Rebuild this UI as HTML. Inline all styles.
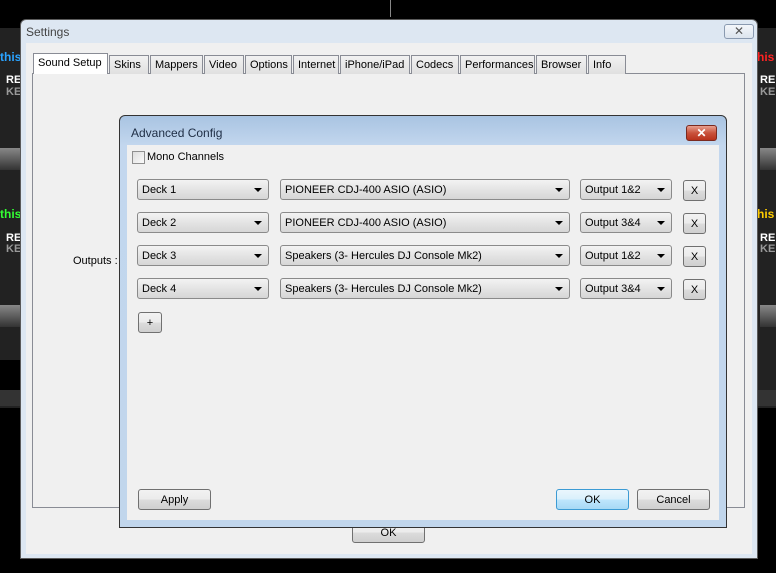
<!DOCTYPE html>
<html><head><style>
*{margin:0;padding:0;box-sizing:border-box}
body{width:776px;height:573px;background:#000;position:relative;overflow:hidden;font-family:"Liberation Sans",sans-serif;font-size:11px;color:#000}
.a{position:absolute}
.dd{position:absolute;height:21px;border:1px solid #8a8a8a;border-radius:3px;background:linear-gradient(#f3f3f3,#e4e4e4 50%,#d6d6d6);padding:4px 4px 0;font-size:11px;white-space:nowrap}
.dd:after{content:"";position:absolute;right:6px;top:8px;border-left:4px solid transparent;border-right:4px solid transparent;border-top:4px solid #000}
.btn{position:absolute;height:21px;border:1px solid #707070;border-radius:3px;background:linear-gradient(#f2f2f2,#ebebeb 50%,#dcdcdc 51%,#cfcfcf);text-align:center;line-height:20px;font-size:11px}
.tab{position:absolute;top:55px;height:19px;border:1px solid #898c95;border-bottom:none;background:linear-gradient(#f2f2f2,#e0e0e0);padding:3px 4px 0;font-size:11px}
</style></head><body>
<div class="a" style="left:390px;top:0;width:1px;height:17px;background:#888"></div>
<div class="a" style="left:0;top:28px;width:20px;height:380px;background:#222"></div>
<div class="a" style="left:757px;top:28px;width:19px;height:380px;background:#222"></div>
<div class="a" style="left:0;top:50px;font-weight:bold;font-size:12px;color:#2aa3ff">this</div>
<div class="a" style="left:6px;top:74px;font-weight:bold;font-size:11px;color:#fff">RE</div>
<div class="a" style="left:6px;top:86px;font-weight:bold;font-size:11px;color:#999">KE</div>
<div class="a" style="left:0;top:148px;width:20px;height:22px;background:linear-gradient(#888,#333)"></div>
<div class="a" style="left:0;top:207px;font-weight:bold;font-size:12px;color:#3f3">this</div>
<div class="a" style="left:6px;top:232px;font-weight:bold;font-size:11px;color:#fff">RE</div>
<div class="a" style="left:6px;top:243px;font-weight:bold;font-size:11px;color:#999">KE</div>
<div class="a" style="left:0;top:305px;width:20px;height:22px;background:linear-gradient(#888,#333)"></div>
<div class="a" style="left:0;top:360px;width:20px;height:30px;background:#000"></div>
<div class="a" style="left:0;top:390px;width:776px;height:16px;background:#333"></div>
<div class="a" style="left:757px;top:50px;font-weight:bold;font-size:12px;color:#f22">his</div>
<div class="a" style="left:760px;top:74px;font-weight:bold;font-size:11px;color:#fff">RE</div>
<div class="a" style="left:760px;top:86px;font-weight:bold;font-size:11px;color:#999">KE</div>
<div class="a" style="left:760px;top:148px;width:16px;height:22px;background:linear-gradient(#888,#333)"></div>
<div class="a" style="left:757px;top:207px;font-weight:bold;font-size:12px;color:#fc0">his</div>
<div class="a" style="left:760px;top:232px;font-weight:bold;font-size:11px;color:#fff">RE</div>
<div class="a" style="left:760px;top:243px;font-weight:bold;font-size:11px;color:#999">KE</div>
<div class="a" style="left:760px;top:305px;width:16px;height:22px;background:linear-gradient(#888,#333)"></div>

<div class="a" style="left:20px;top:19px;width:738px;height:540px;background:#dde7f2;border:1px solid #5a5a5a;border-radius:6px 6px 0 0"></div>
<div class="a" style="left:26px;top:25px;font-size:12px;color:#444">Settings</div>
<div class="a" style="left:724px;top:24px;width:30px;height:15px;border:1px solid #8a9ab0;border-radius:3px;background:linear-gradient(#f4f7fb,#dce4ee);text-align:center;font-size:12px;line-height:13px;color:#555">✕</div>
<div class="a" style="left:26px;top:43px;width:726px;height:511px;background:#f0f0f0"></div>
<div class="a" style="left:32px;top:73px;width:713px;height:435px;border:1px solid #898c95;background:#f0f0f0"></div>
<div class="tab" style="left:33px;top:53px;height:21px;background:#fff;width:75px;z-index:2">Sound Setup</div>
<div class="tab" style="left:109px;width:40px">Skins</div>
<div class="tab" style="left:150px;width:53px">Mappers</div>
<div class="tab" style="left:204px;width:40px">Video</div>
<div class="tab" style="left:245px;width:47px">Options</div>
<div class="tab" style="left:293px;width:46px">Internet</div>
<div class="tab" style="left:340px;width:70px">iPhone/iPad</div>
<div class="tab" style="left:411px;width:48px">Codecs</div>
<div class="tab" style="left:460px;width:75px">Performances</div>
<div class="tab" style="left:536px;width:51px">Browser</div>
<div class="tab" style="left:588px;width:38px">Info</div>
<div class="a" style="left:73px;top:255px;font-size:11px">Outputs :</div>
<div class="btn" style="left:352px;top:522px;width:73px;height:21px">OK</div>

<div class="a" style="left:119px;top:115px;width:608px;height:413px;background:linear-gradient(#a9c4e2,#c3d7ee 30px,#c1d6ec);border:1px solid #333;border-radius:6px 6px 0 0"></div>
<div class="a" style="left:131px;top:126px;font-size:12px;color:#1e2d44">Advanced Config</div>
<div class="a" style="left:686px;top:125px;width:31px;height:16px;border:1px solid #7a2a20;border-radius:3px;background:linear-gradient(#e8a090,#c9523c 50%,#b8321c);color:#fff;text-align:center;font-weight:bold;font-size:12px;line-height:14px">✕</div>
<div class="a" style="left:127px;top:145px;width:592px;height:375px;background:#f0f0f0"></div>
<div class="a" style="left:132px;top:151px;width:13px;height:13px;border:1px solid #8f8f8f;background:linear-gradient(135deg,#ddd,#fafafa)"></div>
<div class="a" style="left:147px;top:151px;font-size:11px">Mono Channels</div>

<div class="dd" style="left:137px;top:179px;width:132px">Deck 1</div>
<div class="dd" style="left:280px;top:179px;width:290px">PIONEER CDJ-400 ASIO (ASIO)</div>
<div class="dd" style="left:580px;top:179px;width:92px">Output 1&amp;2</div>
<div class="btn" style="left:683px;top:180px;width:23px">X</div>

<div class="dd" style="left:137px;top:212px;width:132px">Deck 2</div>
<div class="dd" style="left:280px;top:212px;width:290px">PIONEER CDJ-400 ASIO (ASIO)</div>
<div class="dd" style="left:580px;top:212px;width:92px">Output 3&amp;4</div>
<div class="btn" style="left:683px;top:213px;width:23px">X</div>

<div class="dd" style="left:137px;top:245px;width:132px">Deck 3</div>
<div class="dd" style="left:280px;top:245px;width:290px">Speakers (3- Hercules DJ Console Mk2)</div>
<div class="dd" style="left:580px;top:245px;width:92px">Output 1&amp;2</div>
<div class="btn" style="left:683px;top:246px;width:23px">X</div>

<div class="dd" style="left:137px;top:278px;width:132px">Deck 4</div>
<div class="dd" style="left:280px;top:278px;width:290px">Speakers (3- Hercules DJ Console Mk2)</div>
<div class="dd" style="left:580px;top:278px;width:92px">Output 3&amp;4</div>
<div class="btn" style="left:683px;top:279px;width:23px">X</div>

<div class="btn" style="left:138px;top:312px;width:24px">+</div>
<div class="btn" style="left:138px;top:489px;width:73px">Apply</div>
<div class="btn" style="left:556px;top:489px;width:73px;border-color:#3c9bd4;background:linear-gradient(#eaf6fd,#d9f0fc 50%,#bee6fd 51%,#a7d9f5)">OK</div>
<div class="btn" style="left:637px;top:489px;width:73px">Cancel</div>
</body></html>
